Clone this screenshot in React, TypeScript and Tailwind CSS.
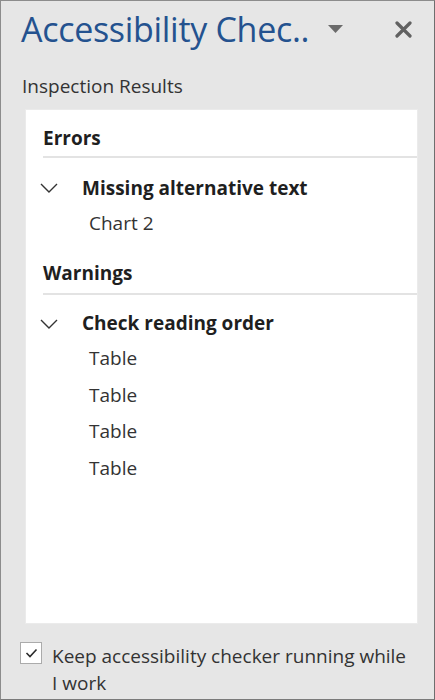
const font = { fontFamily: '"Open Sans", "Noto Sans", sans-serif' };

function Row({ h, children }: { h: string; children: React.ReactNode }) {
  return <div className={`flex items-center ${h}`}>{children}</div>;
}

function Chevron() {
  return (
    <svg width="18" height="10" viewBox="0 0 18 10" className="-ml-[3px] shrink-0">
      <path d="M1 1 L9 9 L17 1" stroke="#333" strokeWidth="1.4" fill="none" />
    </svg>
  );
}

export default function App() {
  const tables = ['Table', 'Table', 'Table', 'Table'];

  return (
    <div style={font} className="w-[435px] h-[700px] bg-[#e6e6e6] border border-[#8c8c8c] border-r-[#6e6e6e] border-b-[#7a7a7a] flex flex-col overflow-hidden">
      {/* header */}
      <div className="h-[56px] flex items-center pl-[20px] pr-[22px]">
        <h1 className="text-[34px] leading-none text-[#24528f] tracking-[-0.3px] whitespace-nowrap">Accessibility Chec..</h1>
        <svg width="15" height="8" viewBox="0 0 15 8" className="ml-[19px]">
          <polygon points="0,0 15,0 7.5,8" fill="#6b6b6b" />
        </svg>
        <svg width="17" height="17" viewBox="0 0 17 17" className="ml-auto">
          <path d="M2 2 L15 15 M15 2 L2 15" stroke="#616161" strokeWidth="3.2" strokeLinecap="round" />
        </svg>
      </div>

      <p className="pl-[21px] mt-[16px] text-[19px] leading-[26px] text-[#333]">Inspection Results</p>

      {/* results */}
      <div className="ml-[24px] mr-[16px] mt-[10px] h-[515px] bg-white border border-[#ebebeb] pl-[17px]">
        <div className="pt-[16px] pb-[6px] text-[19px] leading-[24px] font-bold text-[#1f1f1f]">Errors</div>
        <div className="h-[2px] bg-[#e3e3e3]" />

        <Row h="h-[36px] mt-[12px]">
          <Chevron />
          <span className="ml-[24px] text-[19px] font-bold text-[#1f1f1f]">Missing alternative text</span>
        </Row>
        <Row h="h-[34px]">
          <span className="ml-[46px] text-[19px] text-[#333]">Chart 2</span>
        </Row>

        <div className="pt-[21px] pb-[8px] text-[19px] leading-[24px] font-bold text-[#1f1f1f]">Warnings</div>
        <div className="h-[2px] bg-[#e3e3e3]" />

        <Row h="h-[33px] mt-[12px]">
          <Chevron />
          <span className="ml-[24px] text-[19px] font-bold text-[#1f1f1f]">Check reading order</span>
        </Row>
        {tables.map((t, i) => (
          <Row key={i} h="h-[36.7px]">
            <span className="ml-[46px] text-[19px] text-[#333]">{t}</span>
          </Row>
        ))}
      </div>

      {/* footer */}
      <div className="flex items-start pl-[19px] mt-[19px]">
        <div className="w-[22px] h-[22px] -mt-[1px] bg-white border border-[#ababab] flex items-center justify-center shrink-0">
          <svg width="13" height="10" viewBox="0 0 13 10">
            <path d="M1.5 5 L5 8.5 L11.5 1.5" stroke="#2b2b2b" strokeWidth="1.6" fill="none" />
          </svg>
        </div>
        <p className="ml-[10px] text-[19px] leading-[27px] text-[#333]">
          Keep accessibility checker running while
          <br />I work
        </p>
      </div>
    </div>
  );
}
